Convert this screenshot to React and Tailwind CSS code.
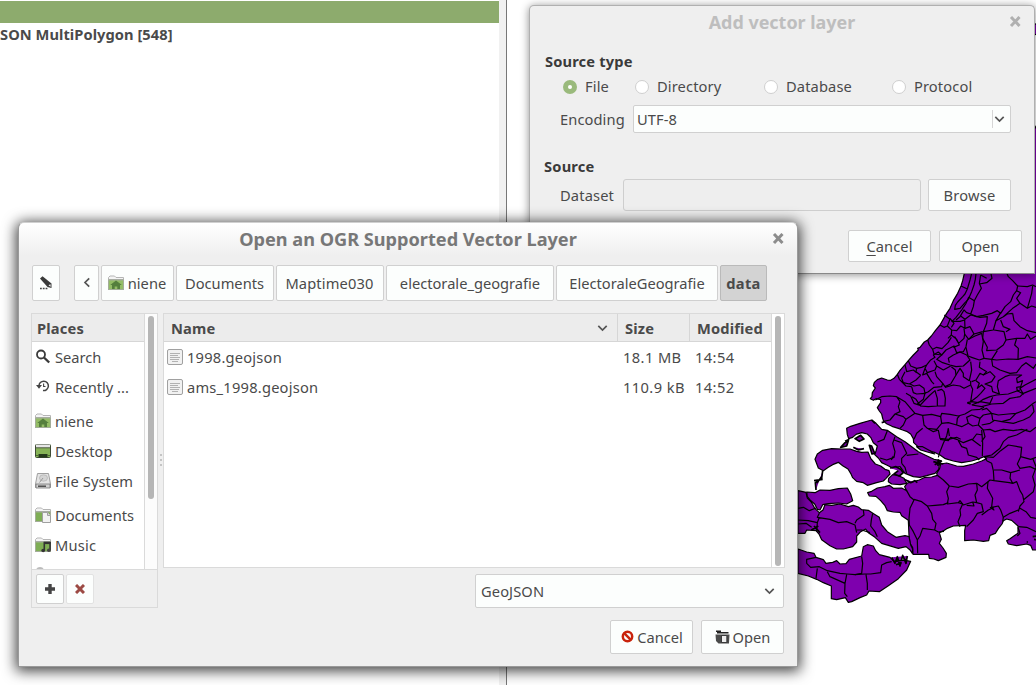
import React from "react";

const LAND_NORTH =
  "M745 -414 L700 -330 L600 -120 L523 40 L518 62 L513 78 L503 100 L490 122 L480 145 L470 160 L463 172 L450 195 L436 212 L424 228 L413 240 L403 246 L390 262 L383 265 L385 270 L370 285 L355 302 L345 314 L330 331 L322 343 L312 355 L302 361 L292 360 L275 354 L262 359 L253 367 L250 377 L256 384 L247 398 L246 410 L241 416 L250 421 L258 416 L272 419 L272 428 L262 443 L268 453 L275 462 L278 475 L281 484 L290 491 L306 499 L325 505 L338 510 L352 515 L362 522 L370 536 L371 548 L384 560 L396 568 L420 573 L436 578 L450 585 L466 596 L490 603 L515 608 L545 603 L565 597 L582 590 L590 596 L575 603 L550 612 L520 619 L500 618 L470 609 L452 612 L449 625 L440 640 L442 646 L425 651 L405 652 L388 660 L370 665 L352 669 L344 680 L350 692 L335 684 L310 685 L298 676 L285 680 L262 684 L245 694 L233 698 L238 708 L258 709 L272 722 L285 737 L292 752 L310 756 L330 757 L335 767 L355 781 L357 826 L360 850 L368 863 L369 883 L416 883 L418 895 L432 897 L445 902 L468 892 L469 880 L459 864 L448 850 L454 838 L448 818 L461 812 L470 806 L490 798 L527 796 L524 812 L524 842 L550 840 L580 844 L596 842 L600 826 L616 820 L625 806 L636 792 L640 782 L650 777 L665 781 L684 798 L684 820 L675 826 L660 836 L650 842 L655 852 L680 857 L710 852 L722 856 L728 870 L745 870 Z";

const ISLANDS = [
  "M170 -5 L182 -11 L210 -20 L245 -30 L258 -20 L275 -2 L292 1 L320 20 L345 35 L362 48 L385 65 L405 75 L432 88 L452 92 L448 105 L446 118 L435 130 L410 137 L390 142 L370 140 L345 130 L330 110 L308 114 L290 105 L275 98 L265 84 L254 74 L258 63 L262 48 L250 38 L242 22 L232 12 L215 8 L198 13 L188 22 L176 26 L172 14 Z",
  "M75 88 L82 72 L98 61 L125 56 L155 57 L180 57 L200 64 L215 67 L234 66 L242 85 L256 102 L272 108 L285 118 L297 122 L300 132 L288 145 L280 153 L260 158 L232 166 L220 158 L200 154 L188 143 L182 130 L174 117 L158 107 L145 97 L128 104 L115 112 L100 122 L85 114 Z",
  "M24 182 L48 187 L52 204 L64 216 L75 236 L88 248 L99 240 L105 224 L125 226 L150 222 L175 230 L190 226 L205 231 L215 239 L235 241 L252 252 L268 262 L275 285 L292 305 L318 322 L345 317 L357 320 L362 345 L368 357 L367 370 L360 360 L348 350 L325 355 L305 349 L275 340 L255 322 L235 308 L227 297 L212 305 L200 318 L200 336 L188 350 L160 357 L140 357 L120 347 L95 329 L87 312 L78 302 L50 300 L45 310 L24 310 Z",
  "M50 186 L75 188 L90 180 L120 181 L145 176 L172 174 L182 192 L188 212 L170 222 L145 219 L115 221 L98 224 L90 240 L82 238 L74 222 L60 210 L52 200 Z",
  "M24 357 L50 366 L72 370 L78 382 L100 389 L108 400 L128 397 L140 392 L150 402 L168 401 L178 388 L215 378 L220 350 L232 344 L250 348 L257 362 L268 374 L300 382 L312 394 L340 390 L362 394 L350 420 L325 446 L295 467 L268 485 L237 483 L230 495 L210 503 L185 515 L175 517 L166 503 L140 509 L124 506 L124 468 L100 458 L80 448 L55 438 L24 430 Z",
  "M296 145 L308 134 L325 137 L342 145 L350 160 L330 164 L305 162 L295 155 Z",
];

const BORDERS_NORTH = [
  "M513 78 L532 87 L525 102 L518 110 L503 126 L496 136 L494 148 L510 145 L525 128 L535 118 L545 95 L552 75 L556 58 L558 40",
  "M545 40 L540 60 L532 87 M572 45 L568 70 L574 85 L562 105 L553 122 L536 112 L528 130 L515 150 L498 172 L486 184",
  "M572 45 L590 55 M568 72 L590 68 L606 55 L603 42 M553 122 L550 140 L542 162 L530 158 L522 150 L510 170 L498 180",
  "M542 162 L560 170 L580 166 L605 160 L622 152 L632 160 L645 140 L662 125 L670 105 L680 92 L683 78 L668 62 L655 50 L650 38",
  "M683 78 L712 80 L728 75 L738 80 M728 78 L725 100 L718 125 L712 145 M680 92 L692 98 L680 115 L690 130 L712 145 L725 138 L738 142",
  "M690 130 L668 145 L640 170 L618 182 L632 158 M668 160 L672 182 L690 200 L712 212 L738 218 M640 170 L652 162 L668 160",
  "M618 182 L610 210 L580 215 L590 190 L592 170 L570 172 L542 165 L525 178 L512 168 M632 180 L640 200 L660 208 L648 215",
  "M463 165 L480 178 L472 198 L462 202 L450 195 M472 198 L485 210 L484 225 L474 235 M480 175 L492 190 L484 202 M484 184 L510 184 L524 180 L525 205 L512 198 L500 212 L484 210",
  "M525 205 L540 200 L552 222 L536 238 L524 222 L522 205 M552 222 L578 215 M484 225 L500 238 L508 255 L490 262 M524 222 L522 235 L506 250 L494 230",
  "M413 240 L418 255 L428 268 L440 262 L456 266 L474 248 L484 232 M428 268 L432 282 L455 285 L468 270 L492 258 L500 278 L520 275 L528 260 L532 238",
  "M536 238 L555 228 L575 220 L580 245 L576 270 L582 295 L568 300 L545 292 L534 288 L528 262",
  "M580 215 L578 235 L592 262 L590 272 L620 270 L640 255 L648 240 L642 215 L612 210",
  "M648 240 L680 235 L705 235 L712 222 L722 238 L738 228 M680 235 L674 255 L685 265 L684 298 L655 297 L620 300 L605 298 L622 272",
  "M684 298 L712 290 L738 294 M582 295 L605 298 L608 318 L630 330 L660 340 L680 338 L695 318 L708 308 L730 325 L738 312",
  "M355 302 L362 318 L380 325 L395 322 L410 315 L422 300 L435 292 L430 285 L445 276 L455 285 L440 298 L458 308 L480 315 L498 320 L520 318 L540 300 L530 285 L510 276 L490 285 L475 295 L478 308",
  "M410 315 L405 325 L412 338 L435 330 L440 318 L432 302 M440 318 L460 330 L482 318 M405 325 L398 345 L410 340 L425 365 L432 372 M380 325 L378 335 L392 346 M345 314 L350 335 L370 330 L380 338",
  "M345 335 L335 355 L340 368 L358 372 L378 360 L392 346 M322 343 L328 358 L348 378 L365 380 M360 372 L372 378 L388 375 L402 385 L405 400 L415 395 L432 382 L455 380 L458 370 L440 350 L435 335",
  "M365 380 L370 398 L380 402 L405 400 L400 418 L382 432 M348 400 L362 408 L372 430 L390 436 L378 418 L366 410 M458 370 L465 380 L482 372 L498 345 L496 330 L484 320",
  "M390 436 L405 420 L420 405 L435 392 L442 415 L442 438 L415 440 L390 438 M442 438 L465 438 L466 415 L462 395 L455 388 L442 392 M465 382 L490 375 L510 378 L522 385 L542 375 L542 362",
  "M498 345 L510 325 L520 340 L520 350 L538 362 L545 330 L542 305 M545 365 L558 360 L570 340 L580 345 L590 335 L568 322 L570 305 M542 375 L548 388 L545 405 L542 425 L560 412 L572 400 L585 385 L575 375 L562 385 L568 370 L558 362",
  "M580 345 L600 335 L615 350 L605 365 L585 372 L605 380 L608 395 L628 402 L622 380 L625 362 L645 350 L660 345 L695 345 L680 355 L682 368 L698 362 L692 380 L680 382 L682 392 L700 402 L690 385 L705 375 L738 358",
  "M532 428 L545 425 L565 428 L580 418 L600 410 L620 405 L655 402 L690 390 M545 435 L570 425 L600 430 L608 412 M545 435 L575 440 L605 432 L640 430 L660 415 L690 410 L700 400 L738 385",
  "M256 420 L275 410 L300 408 L320 410 L330 425 M320 410 L345 425 L362 445 L375 460 L398 466 L425 463 L452 470 L455 460 L480 463 L505 468 L525 462 L545 450 L570 448 L582 442",
  "M330 425 L325 440 L330 455 L315 462 L300 480 L281 484 M315 462 L340 470 L348 478 L375 460 M348 478 L340 495 L330 505 M398 466 L402 495 L412 505 L440 508 L455 490 L452 470",
  "M398 505 L380 520 L372 538 M412 505 L430 515 L445 510 M455 490 L475 488 L500 495 L502 475 L508 468 M500 495 L515 500 L535 490 L530 472 L545 465 L570 475 L565 495 L548 498 L535 490",
  "M570 475 L580 465 L605 460 L590 445 L575 450 M605 460 L608 480 L635 485 L660 478 L678 460 L655 462 L625 465 L605 460 M678 460 L705 450 L730 430 L738 425 M635 485 L670 490 L700 480 L720 470 L732 455 L728 435 M575 495 L600 490 L612 482",
  "M565 495 L580 510 L600 508 L615 515 L640 508 L670 512 L695 508 L720 515 L738 502 M445 510 L450 535 L475 538 L500 532 L512 538 M475 505 L478 528 M580 510 L585 530 L575 545",
];

const BORDERS_SOUTH = [
  "M292 2 L282 28 L262 36 M315 20 L308 40 L315 65 L312 82 L290 90 L270 84 M312 30 L335 38 L350 70 L335 85 L335 100 M350 76 L385 72 M335 100 L345 112 L350 130",
  "M475 -5 L470 18 L460 40 L450 65 L445 82 M450 28 L475 32 L482 22 L500 28 L520 38 L545 28 L572 48 M505 32 L515 50 L530 55 L535 75 L560 82 L568 90 M575 0 L578 40 L577 78 M548 28 L560 12 L577 15",
  "M582 80 L605 75 L630 55 L640 35 L655 22 L680 15 L712 -2 M590 92 L585 80 L610 82 L632 62 L655 45 L695 52 L692 80 L722 88 L738 82 M692 80 L682 102 L690 115 L720 110 L738 118 M738 110 L728 85",
  "M442 136 L460 150 L478 168 L505 172 L535 162 L560 160 L575 170 L594 155 L600 150 L612 152 L610 122 L605 100 L590 92 M612 120 L635 120 L662 128 L690 120 M662 128 L660 145 L668 160 L658 158 L612 152",
  "M668 160 L680 155 L690 182 L698 195 L702 215 L690 228 L685 245 M738 112 L728 140 L735 165 L730 185 L700 210 M690 235 L708 245 L722 262 L738 265 M685 240 L660 250 L640 262 L638 275",
  "M478 168 L470 185 L475 205 L472 222 L505 218 L510 212 L520 225 L548 216 L560 218 L575 222 L580 245 L562 250 L550 270 L530 290 M560 218 L555 195 L562 180 L560 160 M594 155 L592 175 L608 205 L605 230 L612 240 L600 232",
  "M605 232 L625 228 L632 240 L640 262 M575 255 L595 240 L612 232 M548 216 L552 228 L530 226 M505 218 L518 222 L510 240 L512 255 L504 275 L510 290 M412 228 L435 226 L460 224 L475 218",
  "M350 182 L360 200 L372 210 L360 235 L357 265 L358 285 L370 305 L382 330 L383 370 M372 208 L395 215 L412 228 L425 250 L428 268 L438 280 L434 300 L445 306 L462 304 M382 330 L390 318 L398 295 L434 300",
  "M24 235 L40 232 L58 242 L78 234 M88 250 L82 262 L120 268 L145 278 L170 275 L195 285 L200 308 M195 280 L200 270 L222 255 L220 240 M24 270 L55 272 L82 278 L88 262 M82 278 L80 305 M24 282 L48 280 L65 292",
  "M248 250 L244 270 L242 288 L255 305 L262 320 M200 300 L215 300 L240 308 M310 78 L304 90",
  "M78 382 L50 388 L50 400 L62 412 L88 410 L112 422 L150 430 L172 432 L195 434 L215 430 L218 400 L215 380 M82 415 L78 445 M112 425 L120 440 L165 460 L170 434 M165 460 L164 490 L172 500",
  "M195 434 L225 432 L242 432 L272 428 L275 405 L290 398 L305 395 M228 434 L232 460 L232 480 M685 290 L710 292 L738 305 M684 292 L690 310 L682 318",
];

const SPECKS =
  "M152 52 L165 38 L175 32 L170 48 Z M195 26 L212 16 L222 27 L208 34 Z M238 46 L245 48 L254 70 L246 72 Z M165 34 L178 28 M190 52 L205 60 L222 56 M300 114 L318 110 L332 118 L340 128 L328 138 L312 132 L325 122 M342 148 L352 152 L362 158 L374 152 L382 158 M72 152 L98 148 M80 160 L95 140 M98 122 L95 145 L76 158 L78 180 M64 300 L85 288 M72 288 L90 308 M430 95 L460 102 M434 104 L456 92 M445 88 L444 108 M305 382 L315 400 L322 380 L330 408 L338 376 L348 400 L352 378 M310 395 L352 388 M318 404 L335 398 M728 320 L742 318 M732 328 L742 330 M710 336 L714 336 M245 -30 L255 -20 M275 -22 L282 -24 M532 -82 L542 -78";

function MapCanvas() {
  return (
    <svg className="block h-full w-full" viewBox="507 0 529 685" preserveAspectRatio="none">
      <rect x="1030" y="24" width="8" height="10.5" fill="#7e00ae" stroke="#000" strokeWidth="1.2" />
      <g transform="translate(790 260) scale(.33333)" fill="#7e00ae" stroke="#000" strokeWidth="3.600" strokeLinejoin="round">
        <path d={LAND_NORTH} />
        {BORDERS_NORTH.map((d) => <path key={d} d={d} fill="none" />)}
        <g transform="translate(0 510)">
          {ISLANDS.map((d) => <path key={d} d={d} />)}
          {BORDERS_SOUTH.map((d) => <path key={d} d={d} fill="none" />)}
          <path d="M380 50 L398 50 L420 62 L434 72 L412 66 L392 60 Z" />
          <path d={SPECKS} strokeWidth="5" />
        </g>
      </g>
    </svg>
  );
}

function Chevron({ className = "" }) {
  return (
    <svg className={"h-3 w-3 shrink-0 " + className} viewBox="0 0 12 12" fill="none" stroke="#555" strokeWidth="1.7">
      <path d="M1.300 3.800 5.500 8l4.200-4.200" />
    </svg>
  );
}

function CloseIcon({ color }) {
  return (
    <svg className="h-3 w-3" viewBox="0 0 12 12" stroke={color} strokeWidth="3" fill="none">
      <path d="M2 1l8.500 9M10.500 1l-8.500 9" />
    </svg>
  );
}

function FolderIcon({ kind }) {
  return (
    <svg className="h-4 w-4 shrink-0" viewBox="0 0 16 16">
      <path d="M.5 14.500V2.500L2 1h4.500L8 2.500h7.500v12z" fill="#f4f4f4" stroke="#b5b5b5" />
      <path d="M1 4.500h14" stroke="#aaa" />
      <rect x=".5" y="5" width="15" height="9.500" fill={kind === "home" ? "#94bd66" : "#7fae55"} stroke="#a3ad99" />
      {kind === "home" && <path d="M8 5.500 13.800 10H12v4H9.300v-2.500H6.700V14H4v-4H2.200z" fill="#557f3d" />}
      {kind === "documents" && (
        <>
          <path d="M7.500 5.500h5l3 3v7h-8z" fill="#f2f2f2" stroke="#a0a0a0" />
          <path d="M12.500 5.500v3h3" fill="#ddd" stroke="#a0a0a0" />
        </>
      )}
      {kind === "music" && (
        <>
          <path d="M9.300 13V5.500h5.800v7.500" fill="none" stroke="#333" strokeWidth="1.600" />
          <path d="M9 6h6.500" stroke="#333" strokeWidth="2.200" />
          <ellipse cx="8.200" cy="13.500" rx="1.900" ry="1.700" fill="#333" />
          <ellipse cx="13.900" cy="13.300" rx="1.900" ry="1.700" fill="#444" />
        </>
      )}
    </svg>
  );
}

function PlaceIcon({ kind }) {
  if (kind === "search")
    return (
      <svg className="h-4 w-4 shrink-0" viewBox="0 0 16 16" fill="none" stroke="#3a3a3a">
        <circle cx="6" cy="5.500" r="4" strokeWidth="1.800" />
        <path d="M9 8.500l5.200 5" strokeWidth="2.400" />
      </svg>
    );
  if (kind === "recent")
    return (
      <svg className="h-4 w-4 shrink-0" viewBox="0 0 16 16" fill="none" stroke="#444">
        <path d="M4 7A4.700 4.700 0 1 1 8 11.500" strokeWidth="1.500" />
        <path d="M1 6h6L4 9.700z" fill="#444" stroke="none" />
        <path d="M8.600 4.500v3H10.500" strokeWidth="1.100" />
      </svg>
    );
  if (kind === "desktop")
    return (
      <svg className="h-4 w-4 shrink-0" viewBox="0 0 16 16">
        <rect x=".5" y="1.500" width="15" height="13" rx="1" fill="#86b356" stroke="#3e4b35" />
        <path d="M1 1.500h14v3H1z" fill="#e6e6e6" />
        <path d="M1 4.800h14" stroke="#444" strokeWidth=".8" />
        <path d="M3.500 11h9v3.500h-9z" fill="#263a1c" />
        <path d="M1 12.500h2.500M12.500 12.500h2.500" stroke="#4a6c31" />
      </svg>
    );
  if (kind === "disk")
    return (
      <svg className="h-4 w-4 shrink-0" viewBox="0 0 16 16">
        <path d="M2.500.5h11l2 10.500v3.500H.5V11z" fill="#e4e4e4" stroke="#a0a0a0" />
        <ellipse cx="8.500" cy="5" rx="4" ry="3.200" fill="#d4d4d4" stroke="#b5b5b5" strokeWidth=".8" />
        <path d="M4.500 9.500l3.500-4.500" stroke="#999" />
        <path d="M1 11h14v4H1z" fill="#cfcfcf" stroke="#777" strokeWidth=".8" />
        <path d="M3 13.200h8" stroke="#444" strokeWidth="1.400" />
      </svg>
    );
  return <FolderIcon kind={kind} />;
}

function FileIcon() {
  return (
    <svg className="h-4 w-4 shrink-0" viewBox="0 0 16 16">
      <rect x=".5" y=".5" width="15" height="15" rx="1.500" fill="#f1f1f1" stroke="#a0a0a0" />
      <path d="M3 4.500h10M3 6.500h8M3 8.500h10M3 10.500h9M5 12.500h6" stroke="#aaa" strokeWidth=".9" />
    </svg>
  );
}

const btn = "flex items-center justify-center rounded-[2px] border border-[#d0d0d0] bg-[#fcfefd] whitespace-nowrap";

const RADIOS = [
  { label: "File", cls: "w-[72px]", on: true },
  { label: "Directory", cls: "w-[129px]" },
  { label: "Database", cls: "w-[128px]" },
  { label: "Protocol", cls: "w-[100px]" },
];

function AddLayerDialog() {
  return (
    <section className="absolute left-[529px] top-[5px] flex h-[269px] w-[506px] flex-col rounded-t-[5px] border border-[#b0b0b0] border-b-[#888] bg-[#efefef] shadow-[0_1px_8px_rgba(0,0,0,0.45)]">
      <header className="flex h-[32px] items-center pr-[13px]">
        <h2 className="flex-1 pl-[25px] text-center text-[17.95px] font-bold text-[#bebebe]">Add vector layer</h2>
        <CloseIcon color="#b0b0b0" />
      </header>
      <h3 className="mt-[13px] pl-[15px] text-[14.67px] leading-5 font-bold tracking-[0.15px] text-[#3a3a3a]">Source type</h3>
      <div className="mt-[5px] flex h-5 items-center pl-[33px]">
        {RADIOS.map((r) => (
          <label key={r.label} className={"flex shrink-0 items-center gap-[8px] tracking-[0.12px] " + r.cls}>
            <span className={"mt-px flex h-[14px] w-[14px] items-center justify-center rounded-full " + (r.on ? "bg-[#9aba7c]" : "border border-[#cfcfcf] bg-white")}>
              {r.on && <span className="h-[4px] w-[4px] rounded-full bg-white" />}
            </span>
            {r.label}
          </label>
        ))}
      </div>
      <div className="mt-[9px] flex h-[28px] items-center pl-[30px] tracking-[0.1px]">
        <span className="w-[73px]">Encoding</span>
        <div className="flex h-full w-[378px] items-center rounded-[2px] border border-[#d0d0d0] bg-[#fcfefd] pr-[4px] pl-[3px]">
          <span className="flex-1">UTF-8</span>
          <span className="mr-px h-[18px] w-px bg-[#d6d6d6]" />
          <Chevron />
        </div>
      </div>
      <h3 className="mt-[23px] pl-[14px] text-[14.67px] leading-5 font-bold tracking-[0.2px] text-[#3a3a3a]">Source</h3>
      <div className="mt-[3px] flex h-[32px] items-center pl-[30px]">
        <span className="w-[63px] tracking-[0.15px]">Dataset</span>
        <div className="h-full w-[298px] rounded-[3px] border border-[#cecece] bg-[#eee]" />
        <div className={btn + " ml-[7px] h-full w-[83px] tracking-[0.2px]"}>Browse</div>
      </div>
      <div className="mt-[19px] flex h-[32px] justify-end gap-[8px] pr-[12px]">
        <div className={btn + " w-[83px] tracking-[0.1px]"}><span><span className="underline decoration-1 underline-offset-[3px]">C</span>ancel</span></div>
        <div className={btn + " w-[83px]"}>Open</div>
      </div>
    </section>
  );
}

const PLACES = [
  { label: "Search", kind: "search", cls: "h-[30px]" },
  { label: "Recently ...", kind: "recent", cls: "h-[30px] mb-[4px]" },
  { label: "niene", kind: "home", cls: "h-[30px]" },
  { label: "Desktop", kind: "desktop", cls: "h-[30px] tracking-[0.1px]" },
  { label: "File System", kind: "disk", cls: "h-[30px] mb-[4px] tracking-[0.1px]" },
  { label: "Documents", kind: "documents", cls: "h-[30px]" },
  { label: "Music", kind: "music", cls: "h-[30px] tracking-[0.2px]" },
];

const FILES = [
  { name: "1998.geojson", size: "18.1 MB", time: "14:54" },
  { name: "ams_1998.geojson", size: "110.9 kB", time: "14:52" },
];

function PathBar() {
  return (
    <nav className="flex h-[36px] gap-[2px] pl-[13px]">
      <div className={btn + " mr-[12px] w-[28px]"}>
        <svg className="h-4 w-4" viewBox="0 0 16 16">
          <path d="M2 3.500 4.500 1.300 13.500 8.500V13L9.500 12z" fill="#3a3a3a" />
          <path d="M10.500 10.500l1.800-1.600.6 2.800z" fill="#eee" />
          <path d="M2 13.500h8" stroke="#444" strokeWidth="1.400" strokeDasharray="1.800 1" />
        </svg>
      </div>
      <div className={btn + " w-[25px]"}>
        <Chevron className="rotate-90" />
      </div>
      <div className={btn + " w-[73px] gap-1 pr-px"}><FolderIcon kind="home" />niene</div>
      <div className={btn + " w-[98px] pr-px"}>Documents</div>
      <div className={btn + " w-[108px] pr-px tracking-[0.15px]"}>Maptime030</div>
      <div className={btn + " w-[168px]"}>electorale_geografie</div>
      <div className={btn + " w-[162px]"}>ElectoraleGeografie</div>
      <div className="flex w-[47px] items-center justify-center rounded-[2px] border border-[#bababa] bg-[#d3d3d3] font-bold tracking-[0.3px]">data</div>
    </nav>
  );
}

function PlacesPanel() {
  return (
    <aside className="flex h-[295px] w-[127px] flex-col border border-[#dadada]">
      <div className="flex h-[256px] border-b border-[#dadada] bg-white">
        <div className="flex w-[113px] flex-col overflow-hidden border-r border-[#dadada]">
          <div className="flex h-[28px] shrink-0 items-center border-b border-[#d6d6d6] bg-[#ececec] pl-[5px] font-bold tracking-[0.2px]">Places</div>
          {PLACES.map((p) => (
            <div key={p.label} className={"flex shrink-0 items-center gap-[4px] pl-[3px] whitespace-nowrap " + p.cls}>
              <PlaceIcon kind={p.kind} />{p.label}
            </div>
          ))}
          <div className="mt-[7px] ml-[4px] h-4 w-2 shrink-0 rounded-t bg-[#bbb]" />
        </div>
        <div className="flex flex-1 justify-center bg-[#fcfcfc] pt-[2px]">
          <div className="h-[183px] w-[6px] rounded-full bg-[#b6b6b6]" />
        </div>
      </div>
      <div className="flex gap-[2px] pt-[4px] pl-[4px]">
        <div className={btn + " h-[30px] w-[28px]"}>
          <svg className="h-[10px] w-[10px]" viewBox="0 0 10 10"><path d="M3.300 0h3.400v3.300H10v3.400H6.700V10H3.300V6.700H0V3.300h3.300z" fill="#444" /></svg>
        </div>
        <div className="flex h-[30px] w-[28px] items-center justify-center rounded-[2px] border border-[#e2e2e2] bg-[#fcfefd]">
          <svg className="h-[10px] w-[10px]" viewBox="0 0 10 10" stroke="#9c4a44" strokeWidth="3"><path d="M1 1l8 8M9 1L1 9" /></svg>
        </div>
      </div>
    </aside>
  );
}

function FilesPanel() {
  return (
    <div className="flex h-[255px] w-[622px] border border-[#dadada] bg-white">
      <div className="flex w-[608px] flex-col border-r border-[#dadada]">
        <div className="flex h-[28px] border-b border-[#d6d6d6] bg-[#ececec] font-bold tracking-[0.15px]">
          <div className="flex w-[454px] items-center justify-between border-r border-[#d6d6d6] pr-[8px] pl-[7px]">Name<Chevron /></div>
          <div className="flex w-[72px] items-center border-r border-[#d6d6d6] pl-[7px]">Size</div>
          <div className="flex items-center pl-[7px]">Modified</div>
        </div>
        {FILES.map((f) => (
          <div key={f.name} className="flex h-[30px] items-center pl-[3px]">
            <FileIcon />
            <span className="ml-[4px] w-[436px] tracking-[0.22px]">{f.name}</span>
            <span className="w-[72px] tracking-[0.4px]">{f.size}</span>
            <span className="tracking-[0.4px]">{f.time}</span>
          </div>
        ))}
      </div>
      <div className="flex flex-1 justify-center pt-[2px] pb-px">
        <div className="w-[6px] rounded-full bg-[#b6b6b6]" />
      </div>
    </div>
  );
}

function OpenDialog() {
  return (
    <section className="absolute left-[18px] top-[222px] flex h-[445px] w-[780px] flex-col rounded-t-[6px] border border-[#9a9a9a] border-t-[#d0d0d0] border-b-[#999] bg-[#efefef] bg-[linear-gradient(to_bottom,#fff_0px,#efefef_32px)] shadow-[0_2px_14px_2px_rgba(0,0,0,0.75)]">
      <header className="flex h-[32px] items-center pr-[13px]">
        <h2 className="flex-1 pl-[25px] text-center text-[18.15px] font-bold text-[#777]">Open an OGR Supported Vector Layer</h2>
        <CloseIcon color="#8c8c8c" />
      </header>
      <div className="h-[10px] shrink-0" />
      <PathBar />
      <div className="mt-[12px] flex h-[261px] pl-[12px]">
        <PlacesPanel />
        <div className="flex w-[5px] flex-col items-center justify-center gap-[3px] pt-[33px]">
          <i className="h-[2px] w-[2px] bg-[#c4c4c4]" />
          <i className="h-[2px] w-[2px] bg-[#c4c4c4]" />
          <i className="h-[2px] w-[2px] bg-[#c4c4c4]" />
        </div>
        <FilesPanel />
      </div>
      <div className="flex h-[34px] justify-end pr-[13px]">
        <div className="flex w-[309px] items-center justify-between rounded-[2px] border border-[#d0d0d0] bg-[#fcfefd] pr-[7px] pl-[5px] tracking-[0.1px]">GeoJSON<Chevron /></div>
      </div>
      <div className="mt-[12px] flex h-[34px] justify-end gap-[8px] pr-[13px]">
        <div className={btn + " w-[83px] gap-[3px]"}>
          <svg className="h-[14px] w-[14px]" viewBox="0 0 14 14" fill="none" stroke="#c9230c" strokeWidth="2.500">
            <circle cx="7.500" cy="6.500" r="4.700" /><path d="M4.200 3.200l6.600 6.600" />
          </svg>
          Cancel
        </div>
        <div className={btn + " w-[83px] gap-[3px]"}>
          <svg className="h-[15px] w-[15px]" viewBox="0 0 15 15">
            <path d="M1 1.200h5M2 2.700h11.500" stroke="#222" strokeWidth="1.400" />
            <path d="M.5 4.500h14l-.5 9H3.500L1 11z" fill="#4a4a4a" />
            <path d="M6.500 5.500h5.300v7H6.500z" fill="#eee" stroke="#222" strokeWidth=".8" />
          </svg>
          Open
        </div>
      </div>
    </section>
  );
}

export default function App() {
  return (
    <main className="relative flex h-[685px] w-[1036px] overflow-hidden bg-white font-['Noto_Sans',sans-serif] text-[14.67px] leading-5 text-[#4a4a4a]">
      <div className="w-[499px] shrink-0 pt-px">
        <div className="h-[22px] bg-[#8dab6d]" />
        <div className="flex h-[22px] w-[173px] items-center font-bold tracking-[0.05px] whitespace-nowrap">SON MultiPolygon [548]</div>
      </div>
      <div className="w-[8px] shrink-0 border-r border-[#777] bg-[#f1f1f1]" />
      <div className="min-w-0 flex-1">
        <MapCanvas />
      </div>
      <AddLayerDialog />
      <OpenDialog />
    </main>
  );
}
